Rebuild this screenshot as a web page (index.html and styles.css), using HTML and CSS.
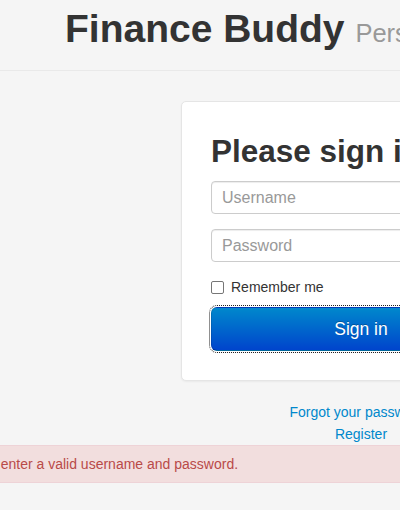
FILE: index.html
```html
<!DOCTYPE html>
<html>
<head>
<meta charset="utf-8">
<link rel="stylesheet" href="styles.css">
</head>
<body>
<div class="page">
  <div class="page-header">
    <h1 class="title">Finance Buddy <small class="subtitle">Personal Finance Manager</small></h1>
  </div>
  <form class="form-signin">
    <h2 class="form-heading">Please sign in</h2>
    <input class="field" type="text" placeholder="Username">
    <input class="field" type="password" placeholder="Password">
    <label class="checkbox"><span class="box"></span>Remember me</label>
    <div class="btn-primary">Sign in</div>
  </form>
  <div class="links">
    <a class="link" href="#">Forgot your password?</a>
    <a class="link" href="#">Register</a>
  </div>
  <div class="alert">Please enter a valid username and password.</div>
</div>
</body>
</html>
```

FILE: styles.css
```css
html, body {
  margin: 0;
  padding: 0;
  background: #f5f5f5;
  overflow: hidden;
}
body {
  font-family: "Liberation Sans", Arial, sans-serif;
  font-size: 14px;
  line-height: 20px;
  color: #333;
}
.page {
  width: 722px;
}
.page-header {
  padding: 9px 0 17px 65px;
  margin: 0 0 30px;
  border-bottom: 1px solid #e9e9e9;
  width: 1000px;
}
.title {
  margin: 0;
  font-size: 39px;
  line-height: 40px;
  font-weight: bold;
  color: #333;
  white-space: nowrap;
}
.subtitle {
  font-size: 25.5px;
  font-weight: normal;
  color: #999;
}
.form-signin {
  width: 300px;
  padding: 19px 29px 29px;
  margin: 0 auto 20px;
  background: #fff;
  border: 1px solid #e5e5e5;
  border-radius: 5px;
  box-shadow: 0 1px 2px rgba(0,0,0,.05);
  display: flex;
  flex-direction: column;
}
.form-heading {
  margin: 10px 0 10px;
  font-size: 31.5px;
  line-height: 40px;
  font-weight: bold;
  color: #333;
  white-space: nowrap;
}
.field {
  box-sizing: border-box;
  width: 100%;
  height: 33px;
  margin: 0 0 15px;
  padding: 0 10px;
  font-family: "Liberation Sans", Arial, sans-serif;
  font-size: 16px;
  color: #555;
  background: #fff;
  border: 1px solid #ccc;
  border-radius: 4px;
  box-shadow: inset 0 1px 1px rgba(0,0,0,.075);
  outline: none;
}
.field::placeholder {
  color: #999;
}
.checkbox {
  display: flex;
  align-items: center;
  height: 20px;
  margin: 0 0 10px;
  font-size: 14px;
  color: #333;
}
.box {
  box-sizing: border-box;
  width: 13px;
  height: 13px;
  margin: 1px 7px 0 0;
  border: 1px solid #767676;
  border-radius: 2px;
  background: #fff;
}
.btn-primary {
  box-sizing: border-box;
  height: 44px;
  display: flex;
  align-items: center;
  justify-content: center;
  font-size: 17.5px;
  color: #fff;
  text-shadow: 0 -1px 0 rgba(0,0,0,.25);
  background: linear-gradient(to bottom, #0088cc, #0044cc);
  border: 1px solid #0044cc;
  border-color: rgba(0,0,0,.1) rgba(0,0,0,.1) rgba(0,0,0,.25);
  border-radius: 6px;
  outline: 1px dotted #222;
  outline-offset: 1px;
}
.links {
  display: flex;
  flex-direction: column;
  align-items: center;
  line-height: 22px;
}
.link {
  color: #0088cc;
  text-decoration: none;
}
.alert {
  margin-left: -61px;
  width: 900px;
  padding: 8px 35px 8px 14px;
  background: #f2dede;
  border: 1px solid #eed3d7;
  color: #b94a48;
  white-space: nowrap;
}
```
